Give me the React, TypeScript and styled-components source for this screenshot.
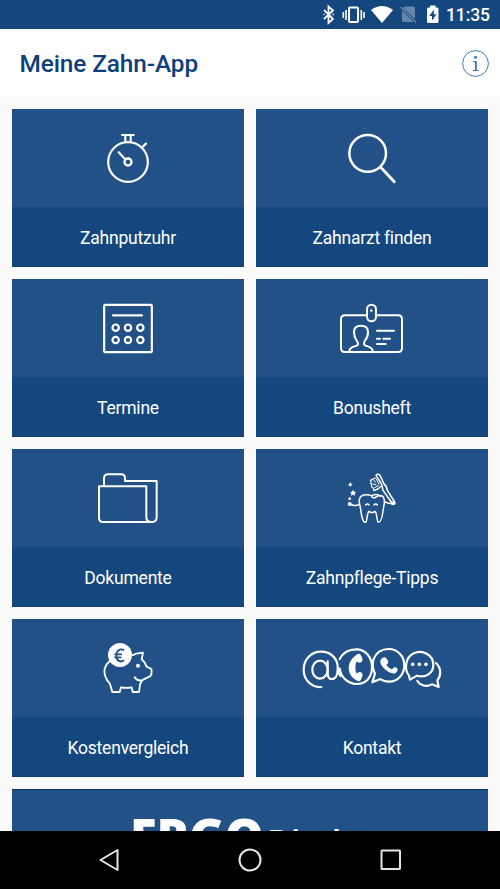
import React from "react";
import styled, { createGlobalStyle } from "styled-components";

const GlobalStyle = createGlobalStyle`
  * { box-sizing: border-box; }
  body { margin: 0; background: #fafafa; overflow: hidden; }
`;

const Screen = styled.div`
  display: flex;
  flex-direction: column;
  width: 500px;
  height: 889px;
  overflow: hidden;
  background: #fafafa;
  font-family: Roboto, "Liberation Sans", sans-serif;
`;

const StatusBar = styled.div`
  display: flex;
  flex: 0 0 29px;
  align-items: center;
  justify-content: flex-end;
  height: 29px;
  padding-right: 10px;
  background: #15477f;
  color: #fff;
`;

const StatusIcons = styled.svg`
  display: block;
  width: 125px;
  height: 29px;
`;

const Clock = styled.span`
  width: 44px;
  padding-top: 2px;
  font-size: 17.5px;
  font-weight: 500;
  line-height: 27px;
  letter-spacing: -0.1px;
  white-space: nowrap;
`;

const Header = styled.header`
  display: flex;
  flex: 0 0 68px;
  align-items: center;
  justify-content: space-between;
  padding: 0 10px 0 19.5px;
  background: #fff;
`;

const Title = styled.h1`
  margin: 2px 0 0;
  color: #0d3f7d;
  font-size: 24.4px;
  font-weight: 500;
  line-height: 32px;
  letter-spacing: -0.1px;
`;

const InfoIcon = styled.svg`
  display: block;
  width: 29px;
  height: 29px;
`;

const Content = styled.main`
  display: flex;
  flex: 1 1 0;
  flex-direction: column;
  gap: 12px;
  min-height: 0;
  overflow: hidden;
  padding: 12px 12px 0;
`;

const Grid = styled.div`
  display: grid;
  flex: none;
  grid-template-columns: 232px 232px;
  grid-auto-rows: 158px;
  gap: 12px;
`;

const Tile = styled.div`
  display: flex;
  flex-direction: column;
  background: #15477f;
  border-bottom: 1px solid #103f7c;
`;

const TileArt = styled.div`
  display: flex;
  flex: 0 0 98px;
  justify-content: center;
  padding-top: 11px;
  background: #225188;
`;

const TileLabel = styled.div`
  display: flex;
  flex: 1;
  align-items: center;
  justify-content: center;
  padding-top: 3px;
  color: #fff;
  font-size: 17.5px;
  line-height: 24px;
  letter-spacing: -0.22px;
`;

const TileIcon = styled.svg<{ $wide?: boolean; $stroke?: number }>`
  display: block;
  flex: none;
  width: ${(p) => (p.$wide ? 156 : 90)}px;
  height: ${(p) => (p.$wide ? 70 : 75)}px;
  fill: none;
  stroke: #fff;
  stroke-width: ${(p) => p.$stroke ?? 6};
  stroke-linecap: round;
  stroke-linejoin: round;
`;

const Banner = styled.div`
  display: flex;
  flex: 0 0 158px;
  align-items: flex-start;
  padding: 13px 0 0 118px;
  border-top: 1px solid #0b2f6c;
  background: #225188;
  color: #fff;
  font-family: "Open Sans", "Noto Sans", sans-serif;
  white-space: nowrap;
`;

const BrandStrong = styled.span`
  width: 137px;
  font-size: 49px;
  font-weight: 800;
  line-height: 67px;
  letter-spacing: -0.5px;
`;

const BrandLight = styled.span`
  padding-top: 15px;
  font-size: 34px;
  font-weight: 600;
  line-height: 48px;
  letter-spacing: -1px;
`;

const NavBar = styled.nav`
  display: flex;
  flex: 0 0 58px;
  align-items: center;
  justify-content: space-between;
  padding: 0 94px;
  background: #000;
`;

const NavIcon = styled.svg`
  display: block;
  width: 30px;
  height: 30px;
  fill: none;
  stroke: #e4e4e4;
  stroke-width: 2;
  stroke-linejoin: round;
`;

const Stopwatch = () => (
  <TileIcon viewBox="-6 0 270 225" $stroke={6.5}>
    <circle cx="129" cy="126" r="59.5" />
    <path d="M111 45H146M121 48V65M137 48V65M170 83L183 71M101 97L120 117" />
    <circle cx="129" cy="126" r="10.500" strokeWidth="7" />
  </TileIcon>
);

const Magnifier = () => (
  <TileIcon viewBox="-9 0 270 225" $stroke={7.5}>
    <circle cx="113" cy="100" r="55" />
    <path d="M152 142L193 185" strokeWidth="8.500" />
  </TileIcon>
);

const Calendar = () => (
  <TileIcon viewBox="-6 0 270 225" $stroke={6.5}>
    <rect x="57.500" y="44.500" width="143" height="142" rx="3" />
    <path d="M84 76H171" />
    {[92, 129, 166].map((cx) =>
      [113, 150].map((cy) => <circle key={`${cx}-${cy}`} cx={cx} cy={cy} r="9.500" />)
    )}
  </TileIcon>
);

const BonusCard = () => (
  <TileIcon viewBox="-9 0 270 225">
    <path d="M109 76H45Q33 76 33 88V174Q33 186 45 186H204Q216 186 216 174V88Q216 76 204 76H140" />
    <rect x="111" y="44" width="27" height="50" rx="13.500" />
    <path d="M124 61V62" strokeWidth="7" />
    <path d="M141 122H192M141 146H150M160 146H180M141 162H167" />
    <path d="M58 184C58 170 72 171 82 166C86 163 83 156 79 150C74 143 72 135 72 126C72 114 80 107 93 107C106 107 114 114 114 126C114 137 111 145 106 150C102 156 101 163 105 166C115 171 128 170 128 184" />
  </TileIcon>
);

const Folder = () => (
  <TileIcon viewBox="-6 0 270 225">
    <path d="M57 76V56Q57 43 70 43H108Q120 43 120 55V63H215V172Q215 186 201 186H55Q42 186 42 173V79H184V172Q184 186 199 186" />
  </TileIcon>
);

const ToothAndBrush = () => (
  <TileIcon viewBox="-9 0 270 225" $stroke={4.5}>
    <path d="M125 107C108 101 91 104 88 118C86 128 91 138 92 148C94 164 98 188 106 187C113 186 109 161 117 154C124 160 128 160 135 154C143 161 139 187 146 187C154 187 158 163 160 147C161 136 166 127 162 116C158 102 145 107 139 111C131 116 125 113 125 107ZM125 107Q141 99 151 109" />
    <path d="M59 132Q75 140 88 133M163 125Q176 132 188 130" />
    <path d="M107 135Q112 129 117 135M132 135Q137 129 142 135" />
    <path d="M138 46Q143 39 150 46L162 72Q170 77 172 91L194 126Q197 133 189 133Q186 132 184 126L159 91L155 73Z" />
    <path d="M136 54L121 61C127 64 121 67 122 71C129 72 122 77 125 81C133 81 128 87 132 92Q144 89 154 78" strokeWidth="3.500" />
    <path d="M131 60L137 67M139 57L147 73M129 72L138 74M134 83L145 77" strokeWidth="3" />
    <g fill="#fff" stroke="none">
      <circle cx="59" cy="132" r="6" />
      <circle cx="189" cy="130" r="6" />
      <circle cx="59" cy="116" r="4" />
      <path d="M61 67L63.500 71L68 73L64 76L62.500 80L59 77L54 75L58 71.500ZM69 89L72 95L79 96L74 100L75 107L69 104L63 107L64 100L60 96L66 95Z" />
    </g>
  </TileIcon>
);

const PiggyBank = () => (
  <TileIcon viewBox="-6 0 270 225" $stroke={5.5}>
    <path d="M137 76Q147 76 153 71L174 68L170 88Q180 96 184 109L199 117Q202 132 195 139Q185 143 176 148Q167 154 165 164L162 186H143L140 172Q123 175 108 172L104 186H82L75 162Q54 138 59 116Q64 101 74 94M149 142Q156 154 172 151" />
    <circle cx="105" cy="75" r="36" fill="#fff" stroke="none" />
    <circle cx="159" cy="107" r="6" fill="#fff" stroke="none" />
    <path d="M117 61C105 54 94 62 94 77C94 92 106 99 117 91M88 73H111M88 82H109" stroke="#225188" strokeLinecap="butt" />
  </TileIcon>
);

const ContactMethods = () => (
  <TileIcon $wide viewBox="-3 -15 468 210" $stroke={6.5}>
    <path d="M79 156C50 158 26 135 26 104C26 73 49 50 78 50C109 50 128 72 128 97C128 109 132 118 137 123M98 79V113Q98 133 111 132C122 132 128 119 128 102" />
    <ellipse cx="75" cy="104" rx="23" ry="27" />
    <path d="M134 72C144 52 160 43 184 43C211 43 231 66 231 97C231 126 213 147 187 147C160 147 137 127 134 101" />
    <path d="M235 74C243 53 260 42 281 42C308 42 328 64 328 91C328 119 308 140 282 140Q266 140 256 132L232 142L240 116Q230 98 235 74Z" />
    <path d="M342 122C326 102 332 67 356 55C383 42 414 60 415 88C416 115 391 130 366 122L345 134Z" />
    <path d="M423 84C439 99 439 122 427 136L431 156L411 148C394 157 376 152 367 138" />
    <g fill="#fff" stroke="none">
      <path d="M188 57Q195 54 199 63L203 74Q202 82 194 83L184 80C180 91 180 104 184 115L194 111Q202 111 203 121L198 134Q193 142 184 136C153 118 153 78 188 57Z" />
      <path d="M263 68Q270 64 276 72L280 80Q280 85 274 90Q280 99 291 103L298 97Q302 96 308 101Q309 110 301 115C284 120 254 94 256 79Q257 72 263 68Z" />
      <circle cx="353" cy="88" r="5.500" />
      <circle cx="373" cy="88" r="5.500" />
      <circle cx="393" cy="88" r="5.500" />
    </g>
  </TileIcon>
);

const tiles = [
  { label: "Zahnputzuhr", Icon: Stopwatch },
  { label: "Zahnarzt finden", Icon: Magnifier },
  { label: "Termine", Icon: Calendar },
  { label: "Bonusheft", Icon: BonusCard },
  { label: "Dokumente", Icon: Folder },
  { label: "Zahnpflege-Tipps", Icon: ToothAndBrush },
  { label: "Kostenvergleich", Icon: PiggyBank },
  { label: "Kontakt", Icon: ContactMethods },
];

export default function App() {
  return (
    <>
      <GlobalStyle />
      <Screen>
        <StatusBar>
          <StatusIcons viewBox="321 0 125 29">
            <path d="M324 10L333 19L328.500 23V6.500L333 10.500L324 19" fill="none" stroke="#fff" strokeWidth="1.800" />
            <path d="M323.500 14.500H324.500M332.500 14.500H334" stroke="#fff" strokeWidth="1.500" />
            <rect x="349" y="7.500" width="9" height="14.500" rx="0.800" fill="none" stroke="#fff" strokeWidth="2" />
            <path d="M343.300 12V18M346 10V20M361.300 10V20M364 12V18" stroke="#fff" strokeWidth="1.600" />
            <path d="M371 10Q382 2 393 10L382 23Z" fill="#fff" />
            <path d="M405 6.500H413Q415 6.500 415 8.500V19L403 8ZM402 10.500L413.500 22H403.500Q402 22 402 20.500Z" fill="#6685ac" />
            <path d="M400.500 7L416 22.500" stroke="#6685ac" strokeWidth="1.500" />
            <path d="M430 5.500H435.500V7.500H437Q438.500 7.500 438.500 9V21.500Q438.500 23 437 23H428.500Q427 23 427 21.500V9Q427 7.500 428.500 7.500H430Z" fill="#fff" />
            <path d="M434 9.500L429.200 16H432V20.500L436.500 14.200H433.700Z" fill="#15477f" />
          </StatusIcons>
          <Clock>11:35</Clock>
        </StatusBar>
        <Header>
          <Title>Meine Zahn-App</Title>
          <InfoIcon viewBox="0 0 29 29">
            <circle cx="14.500" cy="14.500" r="12.900" fill="none" stroke="#3b79b5" strokeWidth="1" />
            <circle cx="14.500" cy="8.200" r="1.500" fill="#3b79b5" />
            <path d="M12 12.400H15V21M12 21.500H17.500" fill="none" stroke="#3b79b5" strokeWidth="1" />
            <path d="M14.800 12V21.500" stroke="#3b79b5" strokeWidth="1.700" />
          </InfoIcon>
        </Header>
        <Content>
          <Grid>
            {tiles.map(({ label, Icon }) => (
              <Tile key={label}>
                <TileArt>
                  <Icon />
                </TileArt>
                <TileLabel>{label}</TileLabel>
              </Tile>
            ))}
          </Grid>
          <Banner>
            <BrandStrong>ERGO</BrandStrong>
            <BrandLight>Direkt</BrandLight>
          </Banner>
        </Content>
        <NavBar>
          <NavIcon viewBox="0 0 30 30">
            <path d="M6.500 15L23.500 5V25Z" />
          </NavIcon>
          <NavIcon viewBox="0 0 30 30">
            <circle cx="15" cy="15" r="10.500" />
          </NavIcon>
          <NavIcon viewBox="0 0 30 30">
            <rect x="5.500" y="5.500" width="18.500" height="18.500" rx="0.500" />
          </NavIcon>
        </NavBar>
      </Screen>
    </>
  );
}
